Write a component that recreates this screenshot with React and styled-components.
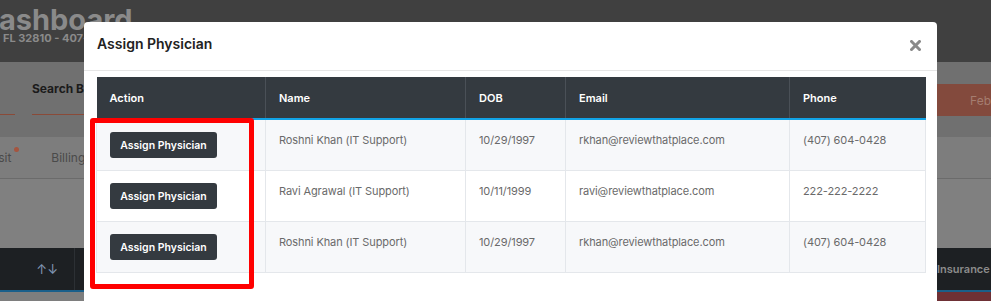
import React from "react";
import styled, { createGlobalStyle } from "styled-components";

const GlobalStyle = createGlobalStyle`
  html, body {
    margin: 0;
    padding: 0;
    width: 991px;
    height: 301px;
    overflow: hidden;
    background: #808080;
    font-family: "Inter", "Open Sans", sans-serif;
  }
`;

const rows = [
  { name: "Roshni Khan (IT Support)", dob: "10/29/1997", email: "rkhan@reviewthatplace.com", phone: "(407) 604-0428" },
  { name: "Ravi Agrawal (IT Support)", dob: "10/11/1999", email: "ravi@reviewthatplace.com", phone: "222-222-2222" },
  { name: "Roshni Khan (IT Support)", dob: "10/29/1997", email: "rkhan@reviewthatplace.com", phone: "(407) 604-0428" },
];

function CloseIcon() {
  return (
    <svg width="11" height="11" viewBox="0 0 11 11">
      <path d="M1.5 1.5 L9.5 9.5 M9.5 1.5 L1.5 9.5" stroke="#8a8a8a" strokeWidth="3" strokeLinecap="square" />
    </svg>
  );
}

function App() {
  return (
    <Page>
      <GlobalStyle />
      <Backdrop>
        <TopBar>
          <BigTitle>Dashboard</BigTitle>
          <Address>Orlando, FL 32810 - 407-682-0000</Address>
        </TopBar>
        <SearchBar>
          <SearchGroup>
            <ShortLine />
            <SearchField>
              <SearchLabel>Search By</SearchLabel>
              <Underline />
            </SearchField>
          </SearchGroup>
          <MonthPill>Feb</MonthPill>
        </SearchBar>
        <TabsBar>
          <Tab>
            Visit
            <Dot />
          </Tab>
          <Tab>Billing Info</Tab>
        </TabsBar>
        <Blank />
        <GridHead>
          <SortCell>↑↓</SortCell>
          <HeadLabel>Insurance</HeadLabel>
        </GridHead>
        <GridFoot>
          <FootLeft />
          <FootRight />
        </GridFoot>
      </Backdrop>

      <Modal>
        <ModalHeader>
          <ModalTitle>Assign Physician</ModalTitle>
          <CloseButton aria-label="Close">
            <CloseIcon />
          </CloseButton>
        </ModalHeader>
        <ModalBody>
          <Table>
            <colgroup>
              <col style={{ width: 169 }} />
              <col style={{ width: 200 }} />
              <col style={{ width: 100 }} />
              <col style={{ width: 224 }} />
              <col style={{ width: 136 }} />
            </colgroup>
            <thead>
              <tr>
                <Th>Action</Th>
                <Th>Name</Th>
                <Th>DOB</Th>
                <Th>Email</Th>
                <Th>Phone</Th>
              </tr>
            </thead>
            <tbody>
              {rows.map((r, i) => (
                <Tr key={i} $striped={i % 2 === 0}>
                  <Td>
                    <AssignButton>Assign Physician</AssignButton>
                  </Td>
                  <Td>{r.name}</Td>
                  <Td>{r.dob}</Td>
                  <Td>{r.email}</Td>
                  <Td>{r.phone}</Td>
                </Tr>
              ))}
            </tbody>
          </Table>
        </ModalBody>
      </Modal>

      <Highlight />
    </Page>
  );
}

const Page = styled.div`
  position: relative;
  width: 991px;
  height: 301px;
  overflow: hidden;
`;

const Backdrop = styled.div`
  display: flex;
  flex-direction: column;
  width: 100%;
`;

const TopBar = styled.div`
  height: 62px;
  background: #404040;
  display: flex;
  flex-direction: column;
  padding-top: 5px;
  box-sizing: border-box;
`;

const BigTitle = styled.div`
  font-size: 29px;
  font-weight: 700;
  color: #8a8a8a;
  line-height: 29px;
  margin-left: -22px;
`;

const Address = styled.div`
  font-size: 11px;
  font-weight: 700;
  color: #8a8a8a;
  margin-left: -46px;
  margin-top: -3px;
`;

const SearchBar = styled.div`
  height: 75px;
  background: #707070;
  display: flex;
  align-items: flex-start;
  justify-content: space-between;
`;

const SearchGroup = styled.div`
  display: flex;
  align-items: flex-end;
  gap: 17px;
  height: 53px;
`;

const ShortLine = styled.div`
  width: 15px;
  height: 1px;
  background: #8a4a38;
`;

const SearchField = styled.div`
  display: flex;
  flex-direction: column;
  justify-content: flex-end;
  height: 53px;
  width: 120px;
`;

const SearchLabel = styled.div`
  font-size: 12px;
  font-weight: 700;
  color: #1b1b1b;
  margin-bottom: 18px;
`;

const Underline = styled.div`
  height: 1px;
  background: #8a4a38;
`;

const MonthPill = styled.div`
  margin-top: 22px;
  width: 120px;
  height: 32px;
  background: #834a3d;
  color: #a57d70;
  font-size: 12px;
  display: flex;
  align-items: center;
  justify-content: flex-end;
  box-sizing: border-box;
`;

const TabsBar = styled.div`
  height: 42px;
  background: #7d7d7d;
  border-bottom: 1px solid #6b6b6b;
  box-sizing: border-box;
  display: flex;
  align-items: center;
  gap: 32px;
  margin-left: -13px;
`;

const Tab = styled.div`
  display: flex;
  align-items: flex-start;
  font-size: 12px;
  color: #4a4a4a;
`;

const Dot = styled.span`
  width: 5px;
  height: 5px;
  border-radius: 50%;
  background: #a5553f;
  margin-left: 3px;
  margin-top: -3px;
`;

const Blank = styled.div`
  height: 69px;
  background: #808080;
`;

const GridHead = styled.div`
  height: 44px;
  background: #1d2023;
  border-bottom: 2px solid #1a5f8a;
  box-sizing: border-box;
  display: flex;
  align-items: center;
  justify-content: space-between;
`;

const SortCell = styled.div`
  width: 75px;
  height: 100%;
  border-right: 1px solid #2c3034;
  display: flex;
  align-items: center;
  justify-content: flex-end;
  padding-right: 16px;
  box-sizing: border-box;
  color: #8196b4;
  font-size: 13px;
`;

const HeadLabel = styled.div`
  width: 54px;
  font-size: 11px;
  font-weight: 600;
  color: #8c8c8c;
  overflow: hidden;
  white-space: nowrap;
`;

const GridFoot = styled.div`
  display: flex;
  height: 10px;
`;

const FootLeft = styled.div`
  flex: 1;
  background: #7e7e7e;
`;

const FootRight = styled.div`
  width: 300px;
  background: #6e3035;
`;

const Modal = styled.div`
  position: absolute;
  left: 84px;
  top: 22px;
  width: 853px;
  height: 320px;
  background: #ffffff;
  border-radius: 4px 4px 0 0;
`;

const ModalHeader = styled.div`
  height: 49px;
  border-bottom: 1px solid #e6e6e6;
  box-sizing: border-box;
  display: flex;
  align-items: center;
  justify-content: space-between;
  padding: 0 16px 6px 13px;
`;

const ModalTitle = styled.h5`
  margin: 0;
  font-size: 14px;
  font-weight: 600;
  color: #222;
`;

const CloseButton = styled.button`
  border: 0;
  background: none;
  padding: 0;
  display: flex;
  margin-top: 5px;
`;

const ModalBody = styled.div`
  padding: 6px 12px;
`;

const Table = styled.table`
  width: 829px;
  border-collapse: collapse;
  table-layout: fixed;
`;

const Th = styled.th`
  background: #343a40;
  color: #ffffff;
  font-size: 11px;
  font-weight: 600;
  text-align: left;
  height: 41px;
  padding: 0 13px;
  border-right: 1px solid #4a5057;
  border-bottom: 2px solid #11a3e6;
  &:last-child {
    border-right: 0;
  }
`;

const Tr = styled.tr`
  background: ${(p) => (p.$striped ? "#f7f8fa" : "#ffffff")};
`;

const Td = styled.td`
  border: 1px solid #e4e7eb;
  padding: 11px 13px 12px;
  vertical-align: top;
  font-size: 11px;
  letter-spacing: -0.1px;
  color: #6a6a6a;
  line-height: 18px;
  height: 27px;
  white-space: nowrap;
`;

const AssignButton = styled.button`
  background: #343a40;
  color: #ffffff;
  border: 0;
  border-radius: 3px;
  height: 26px;
  width: 107px;
  padding: 0;
  font-family: inherit;
  font-size: 10.5px;
  font-weight: 600;
  display: block;
  margin-top: 1px;
`;

const Highlight = styled.div`
  position: absolute;
  left: 90px;
  top: 118px;
  width: 164px;
  height: 171px;
  box-sizing: border-box;
  border: 5px solid #ff0000;
  border-radius: 3px;
`;

export default App;
